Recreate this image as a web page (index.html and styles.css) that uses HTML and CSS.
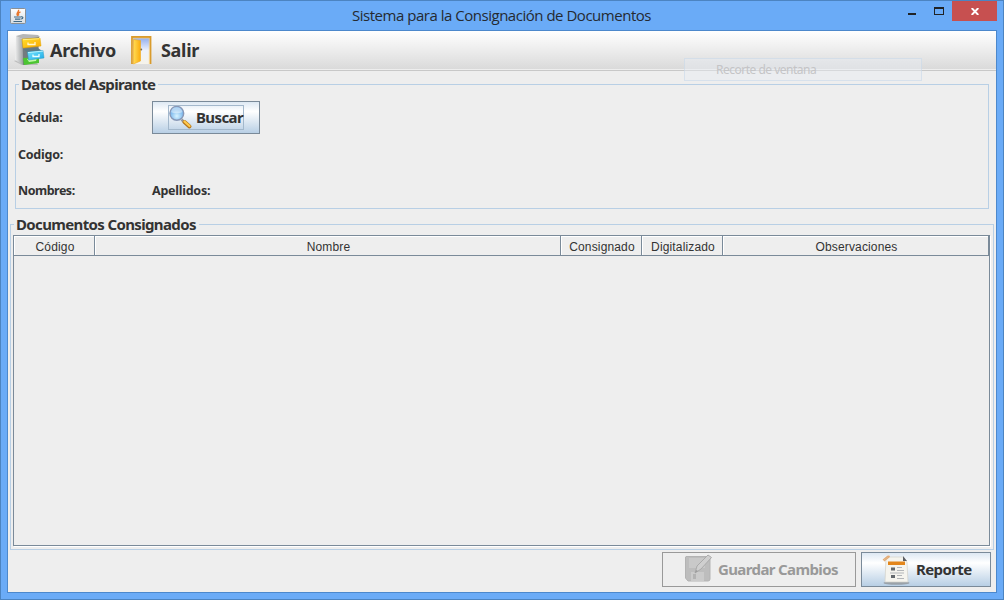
FILE: index.html
```html
<!DOCTYPE html>
<html lang="es">
<head>
<meta charset="utf-8">
<title>Sistema para la Consignación de Documentos</title>
<link rel="stylesheet" href="styles.css">
</head>
<body>
<div class="window">
  <header class="titlebar">
    <svg class="app-icon" width="16" height="16" viewBox="0 0 16 16">
      <defs><linearGradient id="tile" x2="0" y2="1"><stop stop-color="#fff"/><stop offset="1" stop-color="#d5dce2"/></linearGradient></defs>
      <rect x=".5" y=".5" width="15" height="15" rx="1" fill="url(#tile)" stroke="#8a8f94"/>
      <path d="M8.500 1.800C9.500 4 5.200 5 7.800 8M10.500 3.800C7.500 5 8 6.300 9 7.500" fill="none" stroke="#e8762c" stroke-width="1.400"/>
      <path d="M4 9h7M5 11.200h5.500M3.500 13.500h8.500M11 8.800c2.500-.5 2.500 2 0 2.200" fill="none" stroke="#3f6987" stroke-width="1.200"/>
    </svg>
    <h1 class="title">Sistema para la Consignación de Documentos</h1>
    <div class="controls">
      <span class="minimize"></span>
      <span class="maximize"></span>
      <span class="close"><svg width="8" height="7" viewBox="0 0 8 7"><path d="M.7 0 7.300 7M7.300 0 .7 7" stroke="#fff" stroke-width="1.900"/></svg></span>
    </div>
  </header>
  <main class="client">
    <nav class="menubar">
      <a class="menu archivo">
        <svg width="32" height="32" viewBox="0 0 32 32">
          <defs>
            <linearGradient id="side"><stop stop-color="#f0f0f0"/><stop offset="1" stop-color="#9fa3a5"/></linearGradient>
            <linearGradient id="yel" x2="1" y2="1"><stop stop-color="#ffe02e"/><stop offset="1" stop-color="#fba900"/></linearGradient>
            <linearGradient id="blu" x2="1" y2="1"><stop stop-color="#7be8ff"/><stop offset="1" stop-color="#18a8e6"/></linearGradient>
          </defs>
          <path d="M0 27 8 31H24L22 27 7 24Z" fill="#777" opacity=".35"/>
          <path d="M2 2 8 5 9 31 1 26Z" fill="url(#side)"/>
          <path d="M2 2 9 0 24 1 26 3 8 5Z" fill="#b5b7b8"/>
          <path d="M8 5 25 3 24 28 9 31Z" fill="#747b7e"/>
          <path d="M9 24 25 23V29L10 31Z" fill="#4cc532"/><path d="M13 25 23 24 22 27 15 28Z" fill="#c0faa8"/>
          <path d="M8 5 26 4 27 12 9 14Z" fill="url(#yel)" stroke="#e3a400" stroke-width=".5"/>
          <path d="M9 5.700 25.500 4.700" stroke="#ffef83"/><path d="M14 8.500v2h7V8" fill="none" stroke="#fff6cf" stroke-width="1.300"/>
          <path d="M9 15 24 14 28 17 14 19Z" fill="#5f7a85"/><path d="M13.500 18 29 16.500 30 24 14.500 26Z" fill="url(#blu)" stroke="#2698c3" stroke-width=".5"/>
          <path d="M14 18.600 29 17.100" stroke="#b6f2ff"/><path d="M19 20.500v2h6v-2.500" fill="none" stroke="#e9ffff" stroke-width="1.300"/>
        </svg>
        <span class="menu-text">Archivo</span>
      </a>
      <a class="menu salir">
        <svg width="22" height="30" viewBox="0 0 22 30">
          <defs><linearGradient id="sky" x2="0" y2="1"><stop stop-color="#8ba9ec"/><stop offset=".5" stop-color="#eef2fc"/><stop offset="1" stop-color="#f6f3ea"/></linearGradient>
          <linearGradient id="door"><stop stop-color="#ffdc55"/><stop offset="1" stop-color="#fbac0d"/></linearGradient></defs>
          <path d="M1 28V1H19.500V28" fill="url(#sky)" stroke="#d99b2c" stroke-width="1.800"/>
          <path d="M2.200 27V2.200H18.300V28" fill="none" stroke="#ffd177" stroke-width=".6"/>
          <path d="M2.500 3.500 9.500 4.500V25L2.500 28Z" fill="url(#door)" stroke="#f0a81d" stroke-width=".6"/>
          <circle cx="10.300" cy="13.500" r=".9" fill="#7b6c4b"/>
        </svg>
        <span class="menu-text">Salir</span>
      </a>
    </nav>
    <section class="panel applicant">
      <h2 class="legend"><span class="t-datos">Datos del Aspirante</span></h2>
      <div class="fields">
        <span class="t-cedula">Cédula:</span>
        <button class="button search"><span class="focus">
          <svg width="24" height="24" viewBox="0 0 24 24">
            <defs><radialGradient id="lens" cy=".7"><stop stop-color="#d9f3ff"/><stop offset="1" stop-color="#75b4ec"/></radialGradient></defs>
            <path d="m12.500 13.500 3 3" stroke="#999" stroke-width="2.500"/>
            <path d="m15.500 16 5 4.500" stroke="#b7771a" stroke-width="4" stroke-linecap="round"/>
            <path d="m15.500 15.500 5 4.500" stroke="#ffca4e" stroke-width="2.300" stroke-linecap="round"/>
            <circle cx="7.800" cy="7.300" r="6.900" fill="url(#lens)" stroke="#8898b7" stroke-width="1.400"/>
            <path d="M2 6.300Q2.500 1.300 7.500 1.300T13.500 6.300Q7.500 8.300 2 6.300" fill="#fff" opacity=".45"/>
          </svg><span class="t-buscar">Buscar</span></span></button>
        <span class="t-codigo">Codigo:</span><span></span>
        <span class="t-nombres">Nombres:</span><span class="t-apellidos">Apellidos:</span>
      </div>
    </section>
    <section class="panel documents">
      <h2 class="legend"><span class="t-docs">Documentos Consignados</span></h2>
      <div class="scroll">
        <div class="table-head">
          <span class="cell">Código</span><span class="cell">Nombre</span><span class="cell">Consignado</span><span class="cell">Digitalizado</span><span class="cell">Observaciones</span>
        </div>
      </div>
    </section>
    <footer class="actions">
      <button class="button save" disabled>
        <svg width="28" height="28" viewBox="0 0 28 28">
          <path d="M2 2.500H24L26 5V25Q26 27 24 27H4L1.500 24V3Z" fill="#bdbdbd" stroke="#b3b3b3"/>
          <path d="M5 4H21V14H5Z" fill="#c9c9c9"/><path d="M7 18H20V27H7Z" fill="#cbcbcb"/><path d="M9 20h3v5H9Z" fill="#b3b3b3"/>
          <path d="M11 19 13 12 24 1 27.500 3.500 17 15Z" fill="#cfcfcf" stroke="#aaa"/><path d="m11 19 1-3 2 1Z" fill="#999"/>
        </svg><span class="t-guardar">Guardar Cambios</span></button>
      <button class="button report">
        <svg width="28" height="32" viewBox="0 0 28 32">
          <ellipse cx="14.500" cy="29" rx="13" ry="1.700" fill="#8e9295" opacity=".75"/>
          <path d="M4 3H21L25 8 26 28H3Z" fill="#f5f4ee" stroke="#d1d0c9" stroke-width=".7"/>
          <path d="M6 7.500H23V11H6Z" fill="#e3861b"/><path d="m21 2 4 5h-4Z" fill="#5c5e63"/>
          <path d="M9 13.500h4v3H9ZM9 21h4v3H9Z" fill="#63686d"/>
          <path d="M15 13.500h5M15 16.500h7M8 19h14M15 21.500h5M15 24.500h7" stroke="#b3b6b9"/>
          <path d="m1 6 5-4q2 0 1 1L2 7" fill="none" stroke="#e3ab74" stroke-width="1.200"/>
        </svg><span class="t-reporte">Reporte</span></button>
    </footer>
    <div class="tooltip">Recorte de ventana</div>
  </main>
</div>
</body>
</html>
```

FILE: styles.css
```css
* { box-sizing: border-box; }
body { margin: 0; font-family: "Noto Sans", sans-serif; color: #333; }
h1, h2 { margin: 0; font-size: inherit; }
svg { display: block; flex: none; }
span { white-space: nowrap; }
.window { width: 1004px; height: 600px; display: flex; flex-direction: column; background: #6aabf7; border: 1px solid #4c84c1; padding: 0 6px 6px; }
.titlebar { height: 29px; flex: none; display: flex; align-items: flex-start; }
.app-icon { margin: 7px 0 0 3px; }
.title { flex: 1; font: 400 15px/28px "Open Sans", sans-serif; letter-spacing: -.48px; color: #252a31; margin-left: 326px; white-space: nowrap; }
.controls { display: flex; }
.minimize { width: 8px; height: 2px; background: #202326; margin: 12px 18px 0 0; }
.maximize { width: 10px; height: 8px; border: 1px solid #202326; border-top-width: 2px; margin: 6px 8px 0 0; }
.close { width: 45px; height: 20px; background: #c75050; display: grid; place-items: center; }
.client { flex: 1; min-height: 0; display: flex; flex-direction: column; border: 1px solid #4c88cc; background: #eee; position: relative; }
.menubar { height: 40px; flex: none; display: flex; align-items: flex-start; background: linear-gradient(#fff, #dadada 38px, #eee 38px); border-bottom: 1px solid #c8c8c8; font-size: 18px; font-weight: 700; line-height: 38px; letter-spacing: -.3px; }
.menu { display: flex; }
.archivo { padding: 3px 0 0 6px; width: 123px; }
.salir { padding-top: 5px; }
.menu-text { margin: -3px 0 0 4px; }
.salir .menu-text { margin: -5px 0 0 8px; }
.panel { border: 1px solid #b8cfe5; display: flex; flex-direction: column; }
.legend { line-height: 20px; height: 20px; margin-top: -11px; font-size: 15px; letter-spacing: -.64px; }
.legend span { display: inline-block; background: #eee; padding: 0 3px 0 2px; }
.applicant { height: 125px; margin: 13px 7px 0; flex: none; }
.applicant .legend { margin-left: 3px; }
.fields { display: grid; grid-template-columns: 134px 1fr; grid-template-rows: 33px 41px 31px; align-items: center; padding: 7px 0 0 2px; font-size: 12.500px; font-weight: 700; line-height: 17px; letter-spacing: -.25px; }
.t-nombres { letter-spacing: -.5px; }
.button { font: 700 15px/20px "Noto Sans", sans-serif; letter-spacing: -.62px; color: #333; padding: 0; display: flex; align-items: center; border: 1px solid #7a8a99; background: linear-gradient(#dde8f3, #fff 30%, #b8cfe5); }
.search { width: 108px; height: 33px; padding-left: 15px; }
.focus { display: flex; align-items: center; width: 76px; height: 25px; border: 1px solid #a3b8cc; }
.t-buscar { margin: -2px 0 0 3px; }
.documents { height: 326px; flex: none; margin: 15px 2px 0; padding: 0 3px 3px 2px; }
.documents .legend { margin-left: 1px; }
.scroll { height: 311px; margin-top: 1px; border: 1px solid #7a8a99; box-shadow: 1px 1px #fff; }
.table-head { display: grid; grid-template-columns: 81px 466px 81px 81px 1fr; grid-template-rows: 20px; font: 12px/22px "Liberation Sans", sans-serif; letter-spacing: .15px; text-align: center; }
.cell { border-right: 1px solid #7a8a99; border-bottom: 1px solid #7a8a99; box-shadow: inset 1px 1px #fff; padding-left: 2px; }
.actions { display: flex; justify-content: flex-end; gap: 5px; padding: 2px 5px 0; }
.save { width: 194px; height: 35px; padding-left: 21px; color: #999; border-color: #999; background: #eee; }
.save svg { margin-top: -4px; }
.t-guardar { margin: -2px 0 0 6px; }
.report { width: 130px; height: 35px; padding-left: 20px; }
.t-reporte { margin: -2px 0 0 6px; }
.tooltip { position: absolute; left: 676px; top: 27px; width: 238px; height: 23px; border: 1px solid rgba(190,211,231,.45); background: rgba(230,234,242,.45); padding-left: 31px; font: 12px/21px "Noto Sans", sans-serif; letter-spacing: -.5px; color: #c4c4c6; white-space: nowrap; }
```
